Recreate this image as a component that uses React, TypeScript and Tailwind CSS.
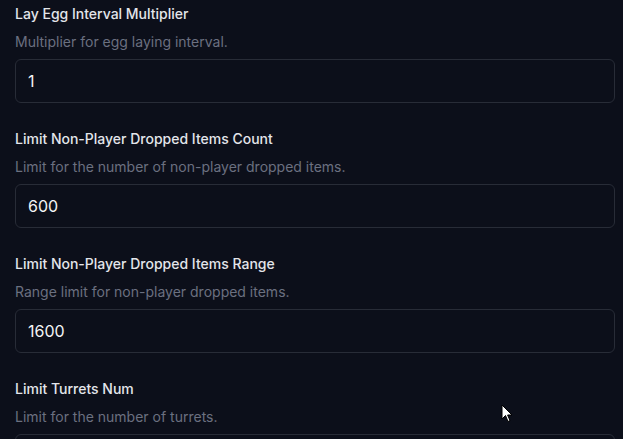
import React from "react";

const fields = [
  { label: "Lay Egg Interval Multiplier", desc: "Multiplier for egg laying interval.", value: "1" },
  { label: "Limit Non-Player Dropped Items Count", desc: "Limit for the number of non-player dropped items.", value: "600" },
  { label: "Limit Non-Player Dropped Items Range", desc: "Range limit for non-player dropped items.", value: "1600" },
  { label: "Limit Turrets Num", desc: "Limit for the number of turrets.", value: "" },
];

export default function App() {
  return (
    <div
      className="relative w-[623px] h-[439px] overflow-hidden bg-[#0c0f1a]"
      style={{ fontFamily: "Inter, 'Noto Sans', sans-serif" }}
    >
      <div className="flex flex-col gap-[26px] pl-[15px] pr-[8px] pt-[4px]">
        {fields.map((f) => (
          <div key={f.label} className="flex flex-col">
            <div className="h-5 text-sm leading-5 font-medium text-[#e3e5ea]">{f.label}</div>
            <div className="mt-2 h-5 text-sm leading-5 text-[#6b7080]">{f.desc}</div>
            <div className="mt-[7px] h-11 w-[600px] rounded-md border border-[#282c37] bg-[#0c0f1a] px-3 flex items-center text-base text-[#f3f4f6]">
              {f.value}
            </div>
          </div>
        ))}
      </div>
      <svg
        className="absolute left-[501px] top-[404px]"
        width="13"
        height="20"
        viewBox="0 0 13 20"
      >
        <path
          d="M1 1 L1 15 L4.5 11.5 L7 17.5 L9 16.6 L6.6 11 L11 11 Z"
          fill="#ffffff"
          stroke="#000000"
          strokeWidth="1"
          strokeLinejoin="miter"
        />
      </svg>
    </div>
  );
}
